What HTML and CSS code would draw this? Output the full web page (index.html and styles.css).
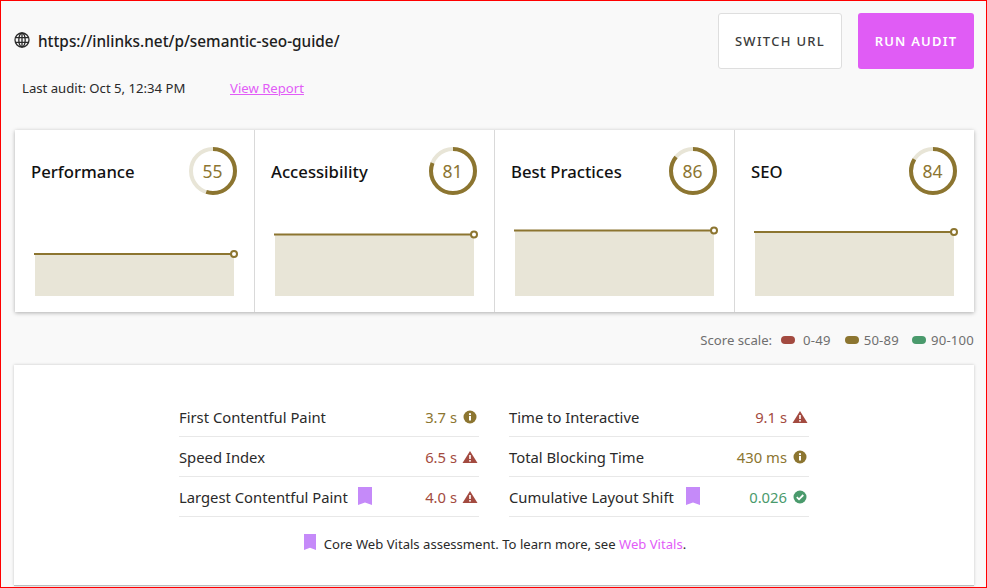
FILE: index.html
```html
<!DOCTYPE html>
<html lang="en">
<head>
<meta charset="utf-8">
<title>Audit</title>
<link rel="stylesheet" href="styles.css">
</head>
<body>
<div class="frame">
  <header class="top">
    <div class="top-left">
      <div class="url">
        <svg class="globe" viewBox="0 0 16 16" width="16" height="16" fill="none" stroke="#2b2b2b" stroke-width="1.3"><circle cx="8" cy="8" r="7"/><ellipse cx="8" cy="8" rx="3.2" ry="7"/><path d="M1.4 5.6h13.2M1.4 10.4h13.2M8 1v14"/></svg>
        <span>https://inlinks.net/p/semantic-seo-guide/</span>
      </div>
      <div class="audit-line">
        <span class="last">Last audit: Oct 5, 12:34 PM</span>
        <a class="report">View Report</a>
      </div>
    </div>
    <div class="actions">
      <button class="btn btn-outline">SWITCH URL</button>
      <button class="btn btn-fill">RUN AUDIT</button>
    </div>
  </header>

  <section class="cards">
    <article class="card">
      <div class="card-head">
        <h2>Performance</h2>
        <div class="gauge">
          <svg viewBox="0 0 48 48" width="48" height="48"><circle class="g-bg" cx="24" cy="24" r="22"/><circle class="g-fg" cx="24" cy="24" r="22" pathLength="100" stroke-dasharray="55 100" transform="rotate(-90 24 24)"/></svg>
          <span>55</span>
        </div>
      </div>
      <svg class="chart" viewBox="0 0 240 100" width="240" height="100"><rect class="area" x="20" y="44" width="199" height="42"/><path class="line" d="M19 44H219"/><circle class="dot" cx="219" cy="44" r="3"/></svg>
    </article>
    <article class="card">
      <div class="card-head">
        <h2>Accessibility</h2>
        <div class="gauge">
          <svg viewBox="0 0 48 48" width="48" height="48"><circle class="g-bg" cx="24" cy="24" r="22"/><circle class="g-fg" cx="24" cy="24" r="22" pathLength="100" stroke-dasharray="81 100" transform="rotate(-90 24 24)"/></svg>
          <span>81</span>
        </div>
      </div>
      <svg class="chart" viewBox="0 0 240 100" width="240" height="100"><rect class="area" x="20" y="24.5" width="199" height="61.500"/><path class="line" d="M19 24.500H219"/><circle class="dot" cx="219" cy="24.500" r="3"/></svg>
    </article>
    <article class="card">
      <div class="card-head">
        <h2>Best Practices</h2>
        <div class="gauge">
          <svg viewBox="0 0 48 48" width="48" height="48"><circle class="g-bg" cx="24" cy="24" r="22"/><circle class="g-fg" cx="24" cy="24" r="22" pathLength="100" stroke-dasharray="86 100" transform="rotate(-90 24 24)"/></svg>
          <span>86</span>
        </div>
      </div>
      <svg class="chart" viewBox="0 0 240 100" width="240" height="100"><rect class="area" x="20" y="20.5" width="199" height="65.500"/><path class="line" d="M19 20.500H219"/><circle class="dot" cx="219" cy="20.500" r="3"/></svg>
    </article>
    <article class="card">
      <div class="card-head">
        <h2>SEO</h2>
        <div class="gauge">
          <svg viewBox="0 0 48 48" width="48" height="48"><circle class="g-bg" cx="24" cy="24" r="22"/><circle class="g-fg" cx="24" cy="24" r="22" pathLength="100" stroke-dasharray="84 100" transform="rotate(-90 24 24)"/></svg>
          <span>84</span>
        </div>
      </div>
      <svg class="chart chart-last" viewBox="0 0 239 100" width="239" height="100"><rect class="area" x="20" y="22" width="199" height="64"/><path class="line" d="M19 22H219"/><circle class="dot" cx="219" cy="22" r="3"/></svg>
    </article>
  </section>

  <div class="scale">
    <span>Score scale:</span>
    <i class="pill red"></i><span class="s1">0-49</span>
    <i class="pill olive"></i><span class="s2 s2-mid">50-89</span>
    <i class="pill green"></i><span class="s2">90-100</span>
  </div>

  <section class="panel">
    <div class="metrics">
      <div class="row">
        <span class="name">First Contentful Paint</span>
        <span class="val olive-t">3.7 s</span>
        <svg class="ico" viewBox="0 0 14 14"><circle cx="7" cy="7" r="6.5" fill="#8c7530"/><rect x="6" y="6" width="2" height="4.500" fill="#fff"/><circle cx="7" cy="4.200" r="1.100" fill="#fff"/></svg>
      </div>
      <div class="row">
        <span class="name">Time to Interactive</span>
        <span class="val red-t">9.1 s</span>
        <svg class="ico" viewBox="0 0 14 14"><path d="M7 1L14.500 13H-.5z" fill="#a34a40"/><rect x="6.200" y="5" width="1.600" height="4" fill="#fff"/><rect x="6.200" y="10" width="1.600" height="1.600" fill="#fff"/></svg>
      </div>
      <div class="row">
        <span class="name">Speed Index</span>
        <span class="val red-t">6.5 s</span>
        <svg class="ico" viewBox="0 0 14 14"><path d="M7 1L14.500 13H-.5z" fill="#a34a40"/><rect x="6.200" y="5" width="1.600" height="4" fill="#fff"/><rect x="6.200" y="10" width="1.600" height="1.600" fill="#fff"/></svg>
      </div>
      <div class="row">
        <span class="name">Total Blocking Time</span>
        <span class="val olive-t">430 ms</span>
        <svg class="ico" viewBox="0 0 14 14"><circle cx="7" cy="7" r="6.5" fill="#8c7530"/><rect x="6" y="6" width="2" height="4.500" fill="#fff"/><circle cx="7" cy="4.200" r="1.100" fill="#fff"/></svg>
      </div>
      <div class="row">
        <span class="name">Largest Contentful Paint</span>
        <svg class="mark" viewBox="0 0 14 18"><path d="M0 0H14V18L7 15.500 0 18z" fill="#c58af9"/></svg>
        <span class="val red-t">4.0 s</span>
        <svg class="ico" viewBox="0 0 14 14"><path d="M7 1L14.500 13H-.5z" fill="#a34a40"/><rect x="6.200" y="5" width="1.600" height="4" fill="#fff"/><rect x="6.200" y="10" width="1.600" height="1.600" fill="#fff"/></svg>
      </div>
      <div class="row">
        <span class="name name-wide">Cumulative Layout Shift</span>
        <svg class="mark" viewBox="0 0 14 18"><path d="M0 0H14V18L7 15.500 0 18z" fill="#c58af9"/></svg>
        <span class="val green-t">0.026</span>
        <svg class="ico" viewBox="0 0 14 14"><circle cx="7" cy="7" r="6.500" fill="#4a9a6c"/><path d="M3.800 7.200L6 9.300 10.300 5" fill="none" stroke="#fff" stroke-width="1.800"/></svg>
      </div>
    </div>
    <p class="note">
      <svg class="mark-sm" viewBox="0 0 12 16"><path d="M0 0H12V16L6 13.800 0 16z" fill="#c58af9"/></svg>
      <span>Core Web Vitals assessment. To learn more, see <a class="link">Web Vitals</a>.</span>
    </p>
  </section>
</div>
</body>
</html>
```

FILE: styles.css
```css
* { box-sizing: border-box; }
html, body { margin: 0; padding: 0; }
body {
  font-family: "Noto Sans", "Open Sans", sans-serif;
  color: #1c1c1c;
  background: #f9f9f9;
}
.frame {
  width: 987px;
  height: 588px;
  border: 1px solid #ff0000;
  background: #f9f9f9;
  overflow: hidden;
  padding: 12px 12px 0 13px;
}
.top {
  display: flex;
  justify-content: space-between;
  height: 117px;
}
.url {
  display: flex;
  align-items: center;
  gap: 8px;
  height: 56px;
  font-size: 15.350px;
  font-weight: 500;
  color: #202020;
}
.globe { flex: none; margin-bottom: 2px; }
.audit-line {
  display: flex;
  margin-top: 7px;
  padding-left: 8px;
  height: 24px;
  align-items: center;
  font-size: 13.150px;
  color: #2a2a2a;
}
.last { width: 208px; }
.report { color: #e25cf7; text-decoration: underline; }
.actions { display: flex; gap: 16px; }
.btn {
  height: 56px;
  border-radius: 3px;
  font-family: inherit;
  font-size: 13px;
  font-weight: 500;
  letter-spacing: 1.300px;
}
.btn-outline {
  width: 124px;
  background: #fff;
  border: 1px solid #dedede;
  color: #3b3b3b;
}
.btn-fill {
  width: 116px;
  background: #e05cf5;
  border: 0;
  color: #fff;
  font-weight: 600;
  letter-spacing: 1.200px;
}
.cards {
  display: flex;
  width: 959px;
  height: 182px;
  margin-left: 1px;
  background: #fff;
  box-shadow: 0 1px 4px rgba(0, 0, 0, .3);
}
.card {
  width: 240px;
  height: 182px;
  border-right: 1px solid #d9d9d9;
}
.card:last-child { width: 239px; border-right: 0; }
.card-head {
  display: flex;
  justify-content: space-between;
  align-items: center;
  height: 80px;
  padding: 17px 17px 15px 16px;
}
h2 {
  margin: 0;
  font-size: 16.700px;
  font-weight: 500;
  color: #111;
}
.gauge {
  position: relative;
  width: 48px;
  height: 48px;
  flex: none;
}
.gauge svg { display: block; }
.gauge span {
  position: absolute;
  inset: 0;
  display: flex;
  align-items: center;
  justify-content: center;
  padding-right: 1px;
  font-size: 17.500px;
  color: #8c7530;
}
.g-bg { fill: none; stroke: #e8e5d7; stroke-width: 4; }
.g-fg { fill: none; stroke: #8c7530; stroke-width: 4; }
.chart { display: block; }
.area { fill: #e8e5d7; }
.line { stroke: #8c7530; stroke-width: 2; fill: none; }
.dot { fill: #fff; stroke: #8c7530; stroke-width: 2; }
.scale {
  display: flex;
  justify-content: flex-end;
  align-items: center;
  height: 53px;
  padding-top: 3px;
  font-size: 13.150px;
  color: #6f6f6f;
}
.pill {
  display: block;
  width: 14px;
  height: 8px;
  border-radius: 4px;
  margin-left: 9px;
}
.s1 { margin-left: 8px; margin-right: 5px; letter-spacing: .2px; }
.s2 { margin-left: 5px; letter-spacing: .2px; }
.s2-mid { margin-right: 4px; }
.red { background: #a34a40; }
.olive { background: #8c7530; }
.green { background: #4a9a6c; }
.panel {
  width: 960px;
  height: 221px;
  background: #fff;
  box-shadow: 0 0 3px rgba(0, 0, 0, .2);
  border-bottom: 1px solid #bdbdbd;
  padding-top: 32px;
}
.metrics {
  display: grid;
  grid-template-columns: 300px 300px;
  column-gap: 30px;
  width: 630px;
  margin: 0 auto;
}
.row {
  display: flex;
  align-items: center;
  height: 40px;
  border-bottom: 1px solid #e8e8e8;
  font-size: 14.800px;
  color: #2a2a2a;
  padding-right: 2px;
}
.name { margin-right: 10px; }
.name-wide { margin-right: 12px; }
.mark { width: 14px; height: 18px; flex: none; margin-bottom: 2px; }
.val { margin-left: auto; margin-right: 6px; }
.ico { width: 14px; height: 14px; flex: none; overflow: visible; }
.olive-t { color: #8c7530; }
.red-t { color: #a34a40; }
.green-t { color: #4a9a6c; }
.note {
  margin: 17px 0 0;
  padding-left: 2px;
  display: flex;
  justify-content: center;
  align-items: center;
  gap: 8px;
  font-size: 13.100px;
  color: #2a2a2a;
}
.mark-sm { width: 12px; height: 16px; flex: none; margin-bottom: 3px; }
.link { color: #e25cf7; }
```
